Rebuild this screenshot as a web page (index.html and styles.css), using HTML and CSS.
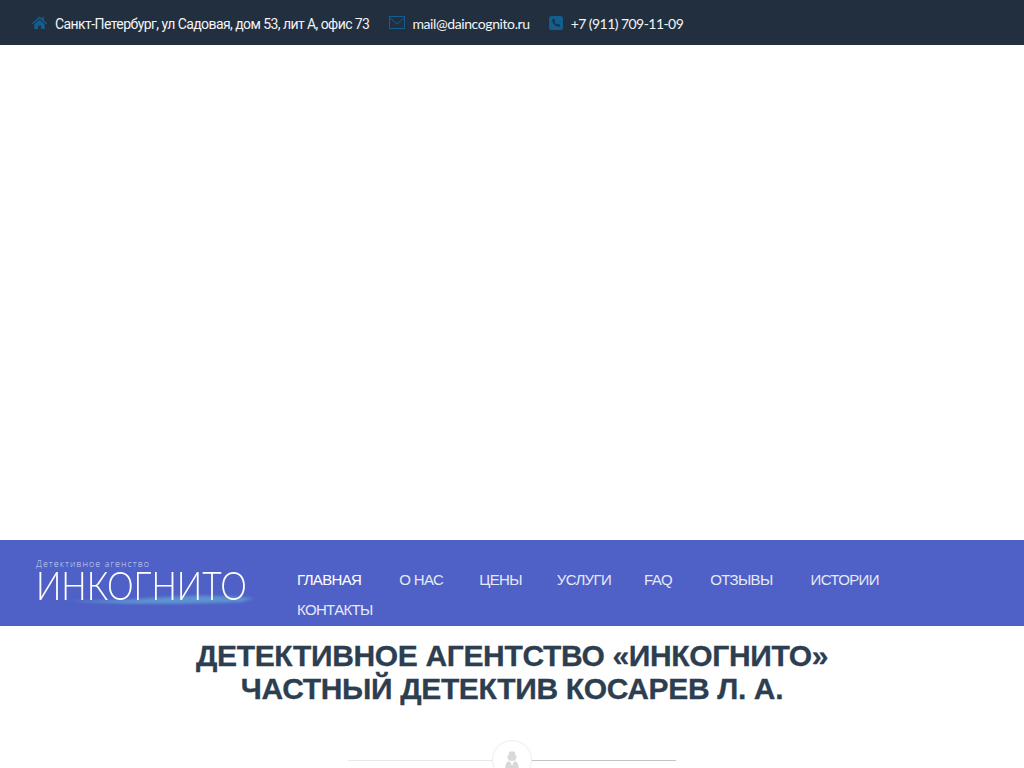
FILE: index.html
```html
<!DOCTYPE html>
<html lang="ru">
<head>
    <meta charset="UTF-8">
    <meta name="viewport" content="width=device-width, initial-scale=1.0">
    <title>Детективное агентство «Инкогнито»</title>
    <link rel="stylesheet" href="styles.css">
</head>
<body>
    <div class="topbar">
        <div class="contact">
            <svg class="icon icon-home" viewBox="0 0 16 14"><path d="M8 0.5 L10.6 2.9 V1.2 H12.6 V4.7 L16 7.8 L15 8.8 L8 2.6 L1 8.8 L0 7.8 Z M8 4 L13.6 9 V14 H9.6 V10.4 H6.4 V14 H2.4 V9 Z"/></svg>
            <span class="address">Санкт-Петербург, ул Садовая, дом 53, лит А, офис 73</span>
        </div>
        <div class="contact">
            <svg class="icon icon-mail" viewBox="0 0 16 13"><rect x="0.5" y="0.5" width="15" height="12" fill="none" stroke-width="1"/><path d="M0.5 1.5 L8 8 L15.5 1.5" fill="none" stroke-width="1"/></svg>
            <span class="mail">mail@daincognito.ru</span>
        </div>
        <div class="contact contact-phone">
            <svg class="icon icon-phone" viewBox="0 0 14 14"><rect width="14" height="14" rx="2.5"/><path class="handset" d="M3.2 3.6 L5 2.8 L6.3 5.2 L5.3 6.2 C5.8 7.2 6.8 8.2 7.8 8.7 L8.8 7.7 L11.2 9 L10.4 10.8 C7 11.4 2.6 7 3.2 3.6 Z"/></svg>
            <span class="phone">+7 (911) 709-11-09</span>
        </div>
    </div>

    <div class="hero"></div>

    <div class="navband">
        <a class="logo" href="#">
            <svg class="logo-wave" width="225" height="14" viewBox="0 0 225 14">
                <defs>
                    <filter id="blur"><feGaussianBlur stdDeviation="1.4"/></filter>
                </defs>
                <path d="M8 7 C44 12 74 9 104 8 C134 5 174 3 218 7 L206 11 C154 13 64 15 8 7 Z" fill="#6cc6dc" opacity="0.5" filter="url(#blur)"/>
            </svg>
            <span class="logo-small">Детективное агенство</span>
            <span class="logo-big">ИНКОГНИТО</span>
        </a>
        <nav class="menu">
            <a class="active" href="#">ГЛАВНАЯ</a>
            <a class="item-about" href="#">О НАС</a>
            <a class="item-prices" href="#">ЦЕНЫ</a>
            <a class="item-services" href="#">УСЛУГИ</a>
            <a href="#">FAQ</a>
            <a href="#">ОТЗЫВЫ</a>
            <a href="#">ИСТОРИИ</a>
            <a href="#">КОНТАКТЫ</a>
        </nav>
    </div>

    <div class="intro">
        <h1>ДЕТЕКТИВНОЕ АГЕНТСТВО «ИНКОГНИТО»<br>ЧАСТНЫЙ ДЕТЕКТИВ КОСАРЕВ Л. А.</h1>
        <div class="divider">
            <span class="line line-left"></span>
            <span class="badge">
                <svg viewBox="0 0 14 18" width="14" height="18"><path d="M4.2 1 C5.5 0.4 8.5 0.4 9.8 1 L10.8 5 L12.4 6 L11 7 C11 9 9.5 10 7 10 C4.5 10 3 9 3 7 L1.6 6 L3.2 5 Z M3 10.5 L5 10.5 L7 15 L9 10.5 L11 10.5 C13 11.5 13.8 14 13.8 18 H0.2 C0.2 14 1 11.5 3 10.5 Z"/></svg>
            </span>
            <span class="line line-right"></span>
        </div>
    </div>
</body>
</html>
```

FILE: styles.css
```css
html, body {
    height: 768px;
    overflow: hidden;
}
body {
    margin: 0;
    background: #fff;
    font-family: Lato, Roboto, sans-serif;
}
.topbar {
    display: flex;
    align-items: center;
    gap: 20px;
    height: 45px;
    padding-left: 32px;
    background: #222f3f;
    color: #f2f4f6;
    font-size: 14px;
}
.contact {
    display: flex;
    align-items: center;
}
.contact span {
    padding-top: 2px;
}
.contact-phone {
    margin-left: -1px;
}
.address {
    font-family: Roboto, sans-serif;
    letter-spacing: -0.57px;
}
.mail {
    letter-spacing: -0.4px;
}
.phone {
    letter-spacing: -0.55px;
}
.icon {
    margin-right: 8px;
    fill: #125f8f;
    stroke: #125f8f;
    stroke-width: 0;
}
.icon-home {
    width: 15px;
    height: 13px;
}
.icon-mail {
    width: 16px;
    height: 13px;
    margin-right: 7px;
}
.icon-phone {
    width: 14px;
    height: 14px;
}
.icon-phone .handset {
    fill: #222f3f;
}
.hero {
    height: 495px;
}
.navband {
    display: flex;
    height: 86px;
    background: #4f60c6;
}
.logo {
    position: relative;
    display: block;
    width: 229px;
    flex: none;
    margin-left: 36px;
    padding-top: 18px;
    color: #fff;
    text-decoration: none;
}
.logo-wave {
    position: absolute;
    left: 0;
    top: 51px;
}
.logo-small {
    display: block;
    font-family: "Open Sans", sans-serif;
    font-size: 9px;
    font-weight: 300;
    line-height: 11px;
    color: #cfd6f2;
    letter-spacing: 1px;
    white-space: nowrap;
}
.logo-big {
    position: relative;
    display: block;
    width: 242px;
    margin-top: 1px;
    font-family: Lato, sans-serif;
    font-size: 40px;
    font-weight: 300;
    line-height: 30px;
    white-space: nowrap;
    transform: scaleX(0.84);
    transform-origin: left;
}
.menu {
    display: flex;
    flex-wrap: wrap;
    align-content: flex-start;
    width: 640px;
    padding: 25px 0 0 32px;
    font-family: "Liberation Sans", Arial, sans-serif;
    font-size: 15px;
    letter-spacing: -0.65px;
    line-height: 30px;
}
.menu a {
    margin-right: 38px;
    color: #e6e9f8;
    text-decoration: none;
}
.menu a.active {
    color: #fff;
}
.menu a.item-about {
    margin-right: 36px;
}
.menu a.item-prices {
    margin-right: 35px;
}
.menu a.item-services {
    margin-right: 33px;
}
.intro {
    text-align: center;
}
h1 {
    margin: 0;
    padding-top: 13px;
    font-family: "Liberation Sans", Arial, sans-serif;
    font-size: 30px;
    font-weight: 700;
    letter-spacing: -0.35px;
    line-height: 33px;
    color: #2c3e50;
    -webkit-text-stroke: 0.3px #2c3e50;
}
.divider {
    display: flex;
    align-items: center;
    justify-content: center;
    margin-top: 35px;
}
.line {
    width: 144px;
    height: 1px;
}
.line-left {
    background: #e8e8e8;
}
.line-right {
    background: #c4c4c4;
}
.badge {
    display: flex;
    align-items: center;
    justify-content: center;
    box-sizing: border-box;
    width: 40px;
    height: 40px;
    border: 1px solid #ececec;
    border-radius: 50%;
    fill: #d8d8d8;
}
```
